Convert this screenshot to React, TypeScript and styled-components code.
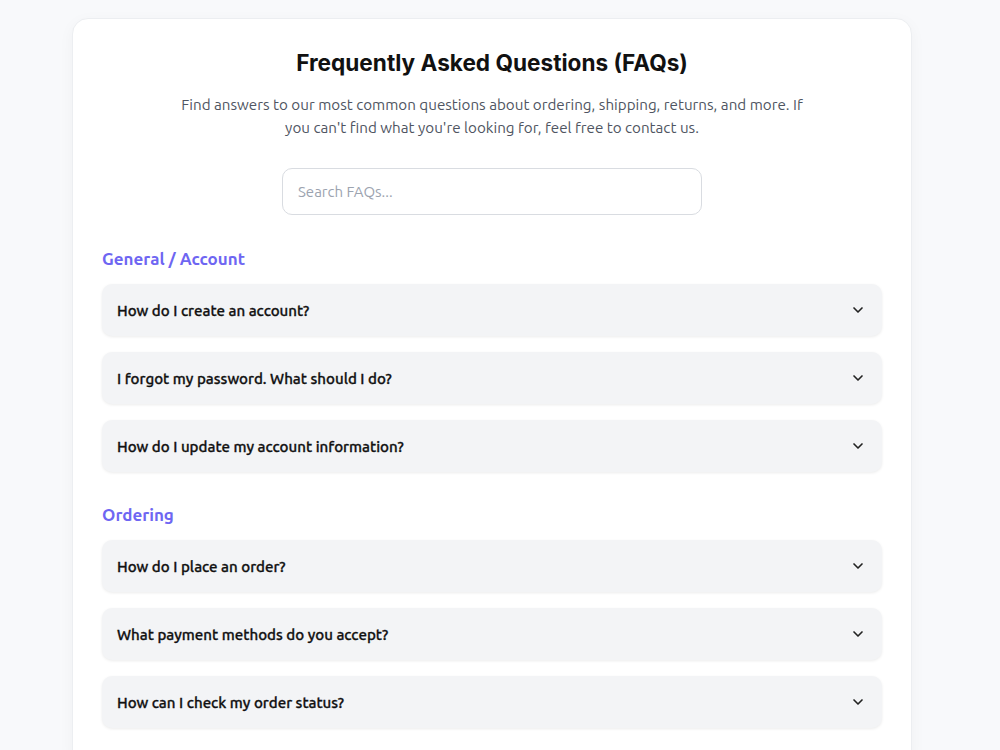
import { useState } from "react";
import styled, { createGlobalStyle } from "styled-components";
import { FiChevronDown } from "react-icons/fi";

const GlobalStyle = createGlobalStyle`
  body {
    margin: 0;
    background: #f8f9fb;
    font-family: "Ubuntu", "Noto Sans", "Open Sans", sans-serif;
  }
`;

const Page = styled.div`
  padding: 18px 0 0 72px;
`;

const Card = styled.div`
  width: 840px;
  box-sizing: border-box;
  background: #ffffff;
  border: 1px solid #eceef1;
  border-radius: 16px;
  box-shadow: 0 4px 16px rgba(0, 0, 0, 0.04);
  padding: 29px 29px 40px;
`;

const Title = styled.h1`
  margin: 0;
  text-align: center;
  font-family: "Inter", "Liberation Sans", sans-serif;
  font-size: 22.6px;
  font-weight: 700;
  color: #111111;
  line-height: 30px;
`;

const Subtitle = styled.p`
  margin: 15px auto 0;
  max-width: 640px;
  text-align: center;
  font-size: 15.2px;
  line-height: 23px;
  color: #4f5562;
`;

const SearchInput = styled.input`
  display: block;
  margin: 29px auto 0;
  width: 420px;
  height: 47px;
  box-sizing: border-box;
  border: 1px solid #d9dce1;
  border-radius: 10px;
  padding: 0 15px;
  font-family: inherit;
  font-size: 15px;
  color: #222;
  outline: none;
  &::placeholder {
    color: #9ca3af;
  }
`;

const Section = styled.section`
  margin-top: 33px;
  & + & {
    margin-top: 32px;
  }
`;

const SectionTitle = styled.h2`
  margin: 0 0 14px;
  font-size: 17px;
  font-weight: 700;
  line-height: 22px;
  color: #6e66f2;
`;

const List = styled.div`
  display: flex;
  flex-direction: column;
  gap: 16px;
`;

const Item = styled.button`
  display: flex;
  align-items: center;
  justify-content: space-between;
  width: 100%;
  height: 52px;
  padding: 0 16px 0 15px;
  box-sizing: border-box;
  border: none;
  border-radius: 10px;
  background: #f3f4f6;
  box-shadow: 0 1px 3px rgba(0, 0, 0, 0.08);
  font-family: inherit;
  font-size: 15.1px;
  font-weight: 500;
  -webkit-text-stroke: 0.3px #111111;
  color: #111111;
  cursor: pointer;
  text-align: left;
`;

const Chevron = styled(FiChevronDown)<{ $open: boolean }>`
  width: 16px;
  height: 16px;
  stroke-width: 2.5;
  color: #222;
  transform: rotate(${(p) => (p.$open ? 180 : 0)}deg);
`;

const sections = [
  {
    title: "General / Account",
    items: [
      "How do I create an account?",
      "I forgot my password. What should I do?",
      "How do I update my account information?",
    ],
  },
  {
    title: "Ordering",
    items: [
      "How do I place an order?",
      "What payment methods do you accept?",
      "How can I check my order status?",
    ],
  },
];

export default function App() {
  const [open, setOpen] = useState<string | null>(null);
  const [query, setQuery] = useState("");

  return (
    <Page>
      <GlobalStyle />
      <Card>
        <Title>Frequently Asked Questions (FAQs)</Title>
        <Subtitle>
          Find answers to our most common questions about ordering, shipping,
          returns, and more. If you can't find what you're looking for, feel
          free to contact us.
        </Subtitle>
        <SearchInput
          placeholder="Search FAQs..."
          value={query}
          onChange={(e) => setQuery(e.target.value)}
        />
        {sections.map((s) => (
          <Section key={s.title}>
            <SectionTitle>{s.title}</SectionTitle>
            <List>
              {s.items.map((q) => (
                <Item key={q} onClick={() => setOpen(open === q ? null : q)}>
                  {q}
                  <Chevron $open={open === q} />
                </Item>
              ))}
            </List>
          </Section>
        ))}
      </Card>
    </Page>
  );
}
